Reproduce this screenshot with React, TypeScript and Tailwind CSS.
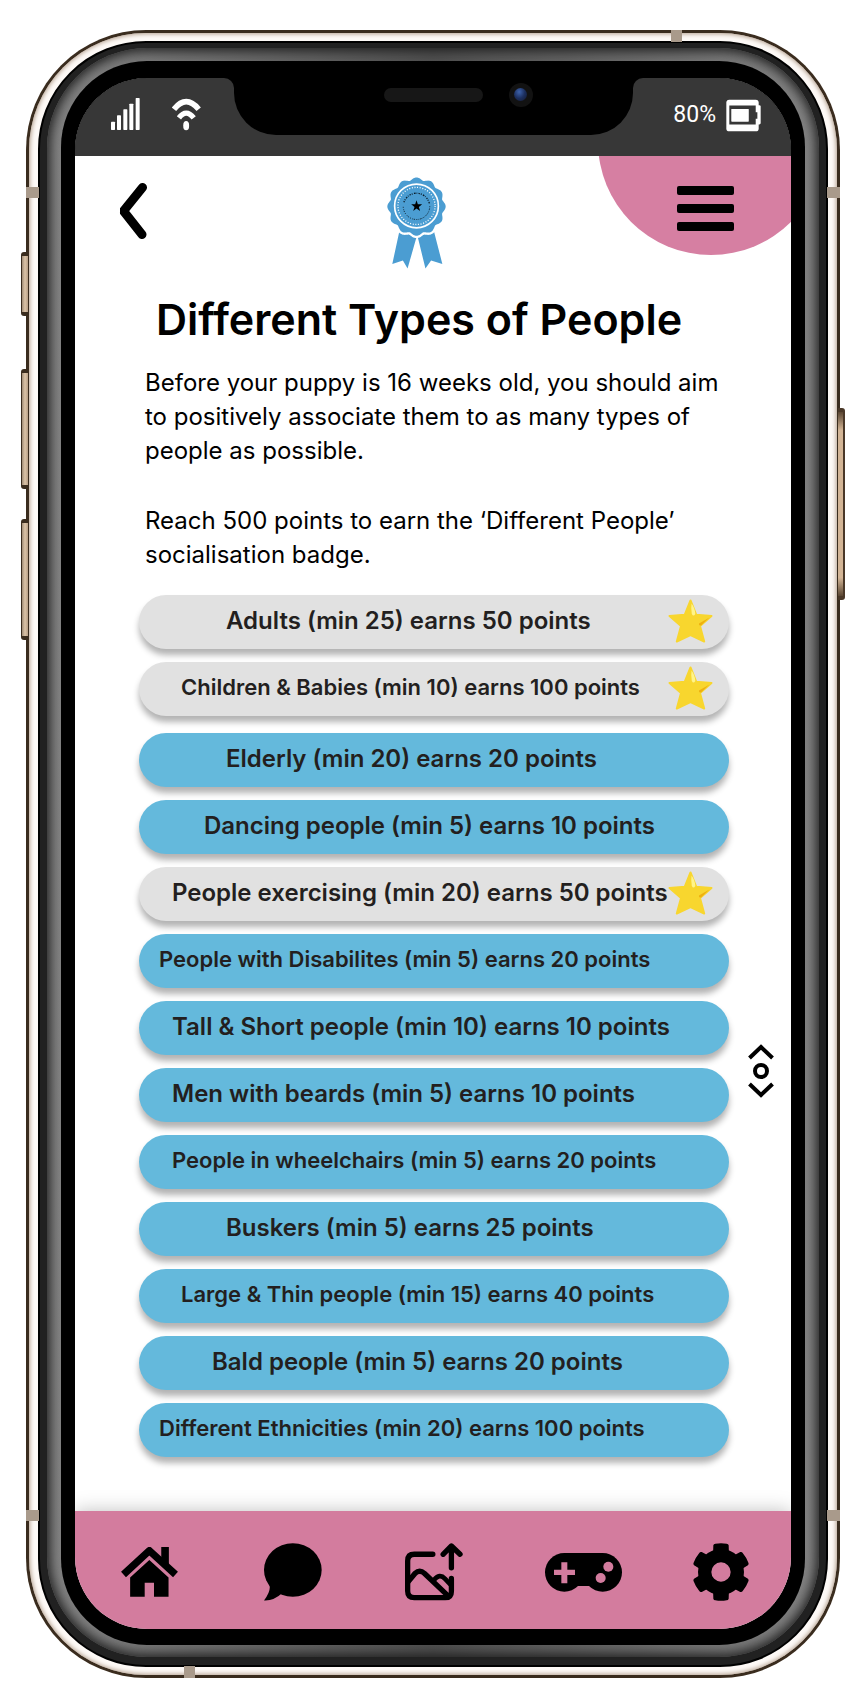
import React from "react";

type Activity = {
  label: string;
  indent: string;
  size: string;
  done?: boolean;
};

const LARGE = "text-[24px]";
const SMALL = "text-[22px]";

const firstGroup: Activity[] = [
  { label: "Adults (min 25) earns 50 points", indent: "pl-[87px]", size: LARGE, done: true },
  { label: "Children & Babies (min 10) earns 100 points", indent: "pl-[42px]", size: SMALL, done: true },
];

const secondGroup: Activity[] = [
  { label: "Elderly (min 20) earns 20 points", indent: "pl-[87px]", size: LARGE },
  { label: "Dancing people (min 5) earns 10 points", indent: "pl-[65px]", size: LARGE },
  { label: "People exercising (min 20) earns 50 points", indent: "pl-[33px]", size: LARGE, done: true },
  { label: "People with Disabilites (min 5) earns 20 points", indent: "pl-[20px]", size: SMALL },
  { label: "Tall & Short people (min 10) earns 10 points", indent: "pl-[33px]", size: LARGE },
  { label: "Men with beards (min 5) earns 10 points", indent: "pl-[33px]", size: LARGE },
  { label: "People in wheelchairs (min 5) earns 20 points", indent: "pl-[33px]", size: SMALL },
  { label: "Buskers (min 5) earns 25 points", indent: "pl-[87px]", size: LARGE },
  { label: "Large & Thin people (min 15) earns 40 points", indent: "pl-[42px]", size: SMALL },
  { label: "Bald people (min 5) earns 20 points", indent: "pl-[73px]", size: LARGE },
  { label: "Different Ethnicities (min 20) earns 100 points", indent: "pl-[20px]", size: SMALL },
];

function SignalIcon() {
  return (
    <svg viewBox="333 290 87 96" className="h-8 w-[29px] fill-white" aria-hidden="true">
      <rect x="333" y="361" width="12" height="25" rx="2" />
      <rect x="351" y="342" width="12" height="44" rx="2" />
      <rect x="370" y="324" width="12" height="62" rx="2" />
      <rect x="388" y="307" width="12" height="79" rx="2" />
      <rect x="407" y="290" width="12" height="96" rx="2" />
    </svg>
  );
}

function WifiIcon() {
  return (
    <svg viewBox="516 295 88 98" className="h-[33px] w-[29px]" aria-hidden="true">
      <path d="M522 328Q559 282 597 328" fill="none" stroke="#fff" strokeWidth="17" />
      <path d="M537 354Q559 325 582 354" fill="none" stroke="#fff" strokeWidth="16" />
      <ellipse cx="559" cy="378" rx="9" ry="14" fill="#fff" />
    </svg>
  );
}

function BatteryIcon() {
  return (
    <svg viewBox="882 302 106 98" className="h-[33px] w-[35px]" aria-hidden="true">
      <rect x="972" y="320" width="15" height="58" rx="4" fill="#fff" />
      <rect x="883" y="303" width="98" height="96" rx="9" fill="#fff" />
      <path d="M892 321H972V341H977V361H972V378H892Z" fill="#373737" />
      <rect x="898" y="331" width="53" height="39" rx="2" fill="#fff" />
    </svg>
  );
}

function scallopPath() {
  const points: string[] = [];
  for (let i = 0; i < 240; i++) {
    const a = (i / 240) * Math.PI * 2;
    const r = 80 + 8 * Math.pow(Math.abs(Math.cos(a * 6)), 1.5);
    points.push(`${(139 + r * Math.cos(a)).toFixed(1)},${(139 + r * Math.sin(a)).toFixed(1)}`);
  }
  return "M" + points.join("L") + "Z";
}

function RosetteIcon() {
  return (
    <svg viewBox="50 50 178 277" className="h-[92px] w-[59px]" role="img" aria-label="Badge">
      <path d="M87 215L140 228L112 326L98 302L66 312Z" fill="#4b9dd2" />
      <path d="M192 215L142 228L166 326L183 302L217 312Z" fill="#4b9dd2" />
      <path d={scallopPath()} fill="#4b9dd2" stroke="#fff" strokeWidth="14" paintOrder="stroke" />
      <circle cx="139" cy="137" r="66" fill="none" stroke="#fff" strokeWidth="5" />
      <circle cx="139" cy="137" r="56" fill="none" stroke="#fff" strokeWidth="4" strokeDasharray="3 5" />
      <path
        d="M101 126A40 40 0 0 1 178 130"
        fill="none"
        stroke="#0b1c29"
        strokeWidth="4"
        strokeDasharray="4 3 3 4 5 3 2 4"
      />
      <path
        d="M179 138A40 40 0 0 1 99 138"
        fill="none"
        stroke="#0b1c29"
        strokeWidth="3"
        strokeDasharray="3 4 4 3 2 4"
      />
      <path d="M139 120L143 132H156L146 140L150 152L139 145L129 152L133 140L123 132H135Z" fill="#000" />
    </svg>
  );
}

function BackIcon() {
  return (
    <svg viewBox="0 0 28 56" className="h-14 w-7" aria-hidden="true">
      <path
        d="M23.500 4.500L4.500 28L23 51.500"
        fill="none"
        stroke="#000"
        strokeWidth="9"
        strokeLinecap="round"
        strokeLinejoin="bevel"
      />
    </svg>
  );
}

function MenuIcon() {
  return (
    <svg viewBox="0 0 57 45" className="h-[45px] w-[57px]" aria-hidden="true">
      <rect width="57" height="9" rx="2" />
      <rect y="18" width="57" height="9" rx="2" />
      <rect y="36" width="57" height="9" rx="2" />
    </svg>
  );
}

function StarIcon() {
  return (
    <svg viewBox="0 0 45 44" className="h-11 w-[45px] shrink-0" role="img" aria-label="Completed">
      <path
        d="M22.500 1.500L28.300 15.800L43.500 17L32 27L36.200 42.500L22.500 36L8.800 42.500L13 27L1.500 17L16.700 15.800Z"
        fill="#f8d62e"
        stroke="#f8d62e"
        strokeWidth="2"
        strokeLinejoin="round"
      />
      <path d="M23.500 4.500Q27 9 27.300 15Q25.500 18 23.800 15Q22.800 9 23.500 4.500Z" fill="#fff48a" />
      <path d="M41.500 18.500L31 24.500Q30.500 26.500 33 26.500Z" fill="#eeb010" />
    </svg>
  );
}

function ScrollIcon() {
  return (
    <svg viewBox="0 0 26 54" className="h-[54px] w-[26px]" fill="none" stroke="#000" aria-hidden="true">
      <path d="M1.500 14L13 3L24.500 14" strokeWidth="4" />
      <circle cx="13" cy="27" r="6" strokeWidth="4" />
      <path d="M1.500 40L13 51L24.500 40" strokeWidth="4" />
    </svg>
  );
}

function HomeIcon() {
  return (
    <svg viewBox="363 195 171 151" className="h-[50px] w-[57px]" aria-hidden="true">
      <path d="M484 195H507V262L484 240Z" />
      <path d="M370 278L448 206L527 278" fill="none" stroke="#000" strokeWidth="22" strokeLinejoin="round" />
      <path d="M390 345V287L448 234L506 287V345H462V303H434V345Z" />
    </svg>
  );
}

function ChatIcon() {
  return (
    <svg viewBox="791 189 175 174" className="h-[58px] w-[58px]" aria-hidden="true">
      <ellipse cx="878" cy="270" rx="87" ry="81" />
      <path d="M806 312Q815 330 791 362Q820 364 848 338Z" />
    </svg>
  );
}

function GalleryIcon() {
  return (
    <svg
      viewBox="30 35 175 173"
      className="h-[58px] w-[58px]"
      fill="none"
      stroke="#000"
      strokeWidth="16"
      strokeLinecap="round"
      strokeLinejoin="round"
      aria-hidden="true"
    >
      <path d="M114 68H58Q38 68 38 88V179Q38 199 58 199H151Q170 199 170 180V141" />
      <path d="M40 150L60 126Q74 113 89 126L156 190" />
      <path d="M117 146Q134 124 151 142L166 158" strokeWidth="14" />
      <path d="M170 109V46M145 68L170 43L196 68" />
    </svg>
  );
}

function GamepadIcon() {
  return (
    <svg viewBox="338 218 231 117" className="h-[39px] w-[77px]" aria-hidden="true">
      <circle cx="396" cy="276" r="58" />
      <circle cx="511" cy="276" r="58" />
      <path d="M396 218H511V300L471 317H436L396 300Z" />
      <path d="M387 246H405V268H428V284H405V309H387V284H365V268H387Z" fill="#d37c9e" />
      <circle cx="528" cy="259" r="15" fill="#d37c9e" />
      <circle cx="505" cy="293" r="15" fill="#d37c9e" />
    </svg>
  );
}

function GearIcon() {
  return (
    <svg viewBox="-87 -87 174 174" className="h-[58px] w-[58px]" aria-hidden="true">
      <circle r="49" fill="none" stroke="#000" strokeWidth="40" />
      {[0, 60, 120, 180, 240, 300].map((angle) => (
        <path
          key={angle}
          transform={`rotate(${angle})`}
          d="M-24 -50L-23 -80Q-22 -85 -17 -85Q0 -88 17 -85Q22 -85 23 -80L24 -50Z"
        />
      ))}
    </svg>
  );
}

function ActivityList({ items }: { items: Activity[] }) {
  return (
    <ul className="flex flex-col gap-[13px]">
      {items.map((item) => (
        <li key={item.label}>
          <button
            type="button"
            className={`flex h-[54px] w-full items-center justify-between rounded-full pr-4 pb-[3px] text-left font-semibold whitespace-nowrap text-[#231f20] shadow-[0_6px_6px_rgba(0,0,0,0.3)] ${item.indent} ${item.size} ${item.done ? "bg-[#e1e1e1]" : "bg-[#64b9dc]"}`}
          >
            <span>{item.label}</span>
            {item.done && <StarIcon />}
          </button>
        </li>
      ))}
    </ul>
  );
}

function StatusBar() {
  return (
    <div className="grid h-[78px] grid-cols-[1fr_399px_1fr] bg-black">
      <div className="flex justify-start rounded-tr-[10px] bg-[#373737] pl-9">
        <div className="flex h-[72px] items-center gap-8">
          <SignalIcon />
          <WifiIcon />
        </div>
      </div>
      <div className="bg-[#373737]">
        <div className="flex h-[57px] items-center gap-[26px] rounded-b-[42px] bg-black pb-6 pl-[150px]">
          <div className="h-[14px] w-[99px] rounded-full bg-[#171717]" />
          <div className="flex size-6 items-center justify-center rounded-full bg-[#121212]">
            <div className="size-[13px] rounded-full bg-radial-[at_40%_30%] from-[#3d62ac] via-[#1c2f5e] to-[#14182c]" />
          </div>
        </div>
      </div>
      <div className="flex justify-end rounded-tl-[10px] bg-[#373737] pr-[30px]">
        <div className="flex h-[74px] items-center gap-[10px]">
          <span className="font-[Roboto,sans-serif] text-[23px] text-white">80%</span>
          <BatteryIcon />
        </div>
      </div>
    </div>
  );
}

function Screen() {
  return (
    <div className="overflow-hidden rounded-[72px] bg-white">
      <StatusBar />

      <header className="relative flex items-start justify-between overflow-hidden pt-[21px] pr-[57px] pl-11">
        <div className="absolute -top-[127px] -right-[33px] size-[226px] rounded-full bg-[#d67fa2]" />
        <button type="button" aria-label="Back" className="flex h-[68px] w-9 items-center">
          <BackIcon />
        </button>
        <RosetteIcon />
        <button type="button" aria-label="Menu" className="relative flex h-[62px] items-center">
          <MenuIcon />
        </button>
      </header>

      <main className="pb-[54px]">
        <h1 className="mt-[26px] pr-7 text-center text-[43px] leading-[48px] font-semibold text-black">
          Different Types of People
        </h1>
        <div className="mt-[23px] pl-[70px] text-[24px] leading-[34px] whitespace-nowrap text-black">
          <p>
            Before your puppy is 16 weeks old, you should aim
            <br />
            to positively associate them to as many types of
            <br />
            people as possible.
          </p>
          <p className="mt-9">
            Reach 500 points to earn the ‘Different People’
            <br />
            socialisation badge.
          </p>
        </div>

        <div className="mt-[23px] flex pl-16">
          <div className="flex flex-1 flex-col gap-[17px]">
            <ActivityList items={firstGroup} />
            <ActivityList items={secondGroup} />
          </div>
          <div className="w-[62px] pt-[449px] pl-[19px]">
            <button type="button" aria-label="Scroll">
              <ScrollIcon />
            </button>
          </div>
        </div>
      </main>

      <nav className="grid h-[118px] grid-cols-[143fr_144fr_138fr_161fr_114fr] items-center justify-items-center bg-[#d37c9e] pt-1 pr-[13px] pl-[3px] shadow-[0_0_18px_rgba(0,0,0,0.25)]">
        <a href="#home" aria-label="Home">
          <HomeIcon />
        </a>
        <a href="#chat" aria-label="Chat">
          <ChatIcon />
        </a>
        <a href="#gallery" aria-label="Gallery">
          <GalleryIcon />
        </a>
        <a href="#games" aria-label="Games">
          <GamepadIcon />
        </a>
        <a href="#settings" aria-label="Settings">
          <GearIcon />
        </a>
      </nav>
    </div>
  );
}

const SIDE_KEY =
  "absolute -left-[5px] w-[7px] rounded-l-[3px] border-y-4 border-l border-[#3a2c1e] bg-linear-to-r from-[#a08c76] via-[#dcc4a8] to-[#b89f86]";
const BAND = "absolute bg-[#a99a8b]";

export default function App() {
  return (
    <div className="min-h-screen bg-white pt-[30px] pr-6 pb-[14px] pl-[26px] font-[Inter,'Noto_Sans',sans-serif]">
      <div className="relative rounded-[120px] bg-[#3a2c1e] p-[3px]">
        <div className={`${SIDE_KEY} top-[222px] h-[64px]`} />
        <div className={`${SIDE_KEY} top-[339px] h-[120px]`} />
        <div className={`${SIDE_KEY} top-[489px] h-[121px]`} />
        <div className="absolute top-[378px] -right-[5px] h-[192px] w-[7px] rounded-r-[3px] border-y-4 border-r-2 border-[#4a3828] bg-[linear-gradient(180deg,#5a4632,#d3b596_10%,#d3b596_90%,#5a4632)]" />

        <div className="rounded-[117px] bg-[#fdf9f6] px-[9px] py-2 shadow-[inset_0_0_4px_1px_#b39f8d]">
          <div className="rounded-[108px] border-2 border-black bg-[#212121] px-[7px] pt-[5px] pb-2">
            <div className="rounded-[100px] bg-linear-to-r from-[#858585] via-[#505050] to-[#858585] px-[14px] pt-[13px] pb-3 shadow-[inset_0_0_12px_3px_#1f1f1f]">
              <div className="rounded-[86px] bg-black px-[14px] pt-[17px] pb-4">
                <Screen />
              </div>
            </div>
          </div>
        </div>

        <div className={`${BAND} top-[157px] left-0 h-[11px] w-[13px]`} />
        <div className={`${BAND} top-[157px] right-0 h-[11px] w-[13px]`} />
        <div className={`${BAND} bottom-[157px] left-0 h-[11px] w-[13px]`} />
        <div className={`${BAND} right-0 bottom-[157px] h-[11px] w-[13px]`} />
        <div className={`${BAND} top-0 right-[158px] h-[12px] w-[11px]`} />
        <div className={`${BAND} bottom-0 left-[158px] h-[12px] w-[11px]`} />
      </div>
    </div>
  );
}
